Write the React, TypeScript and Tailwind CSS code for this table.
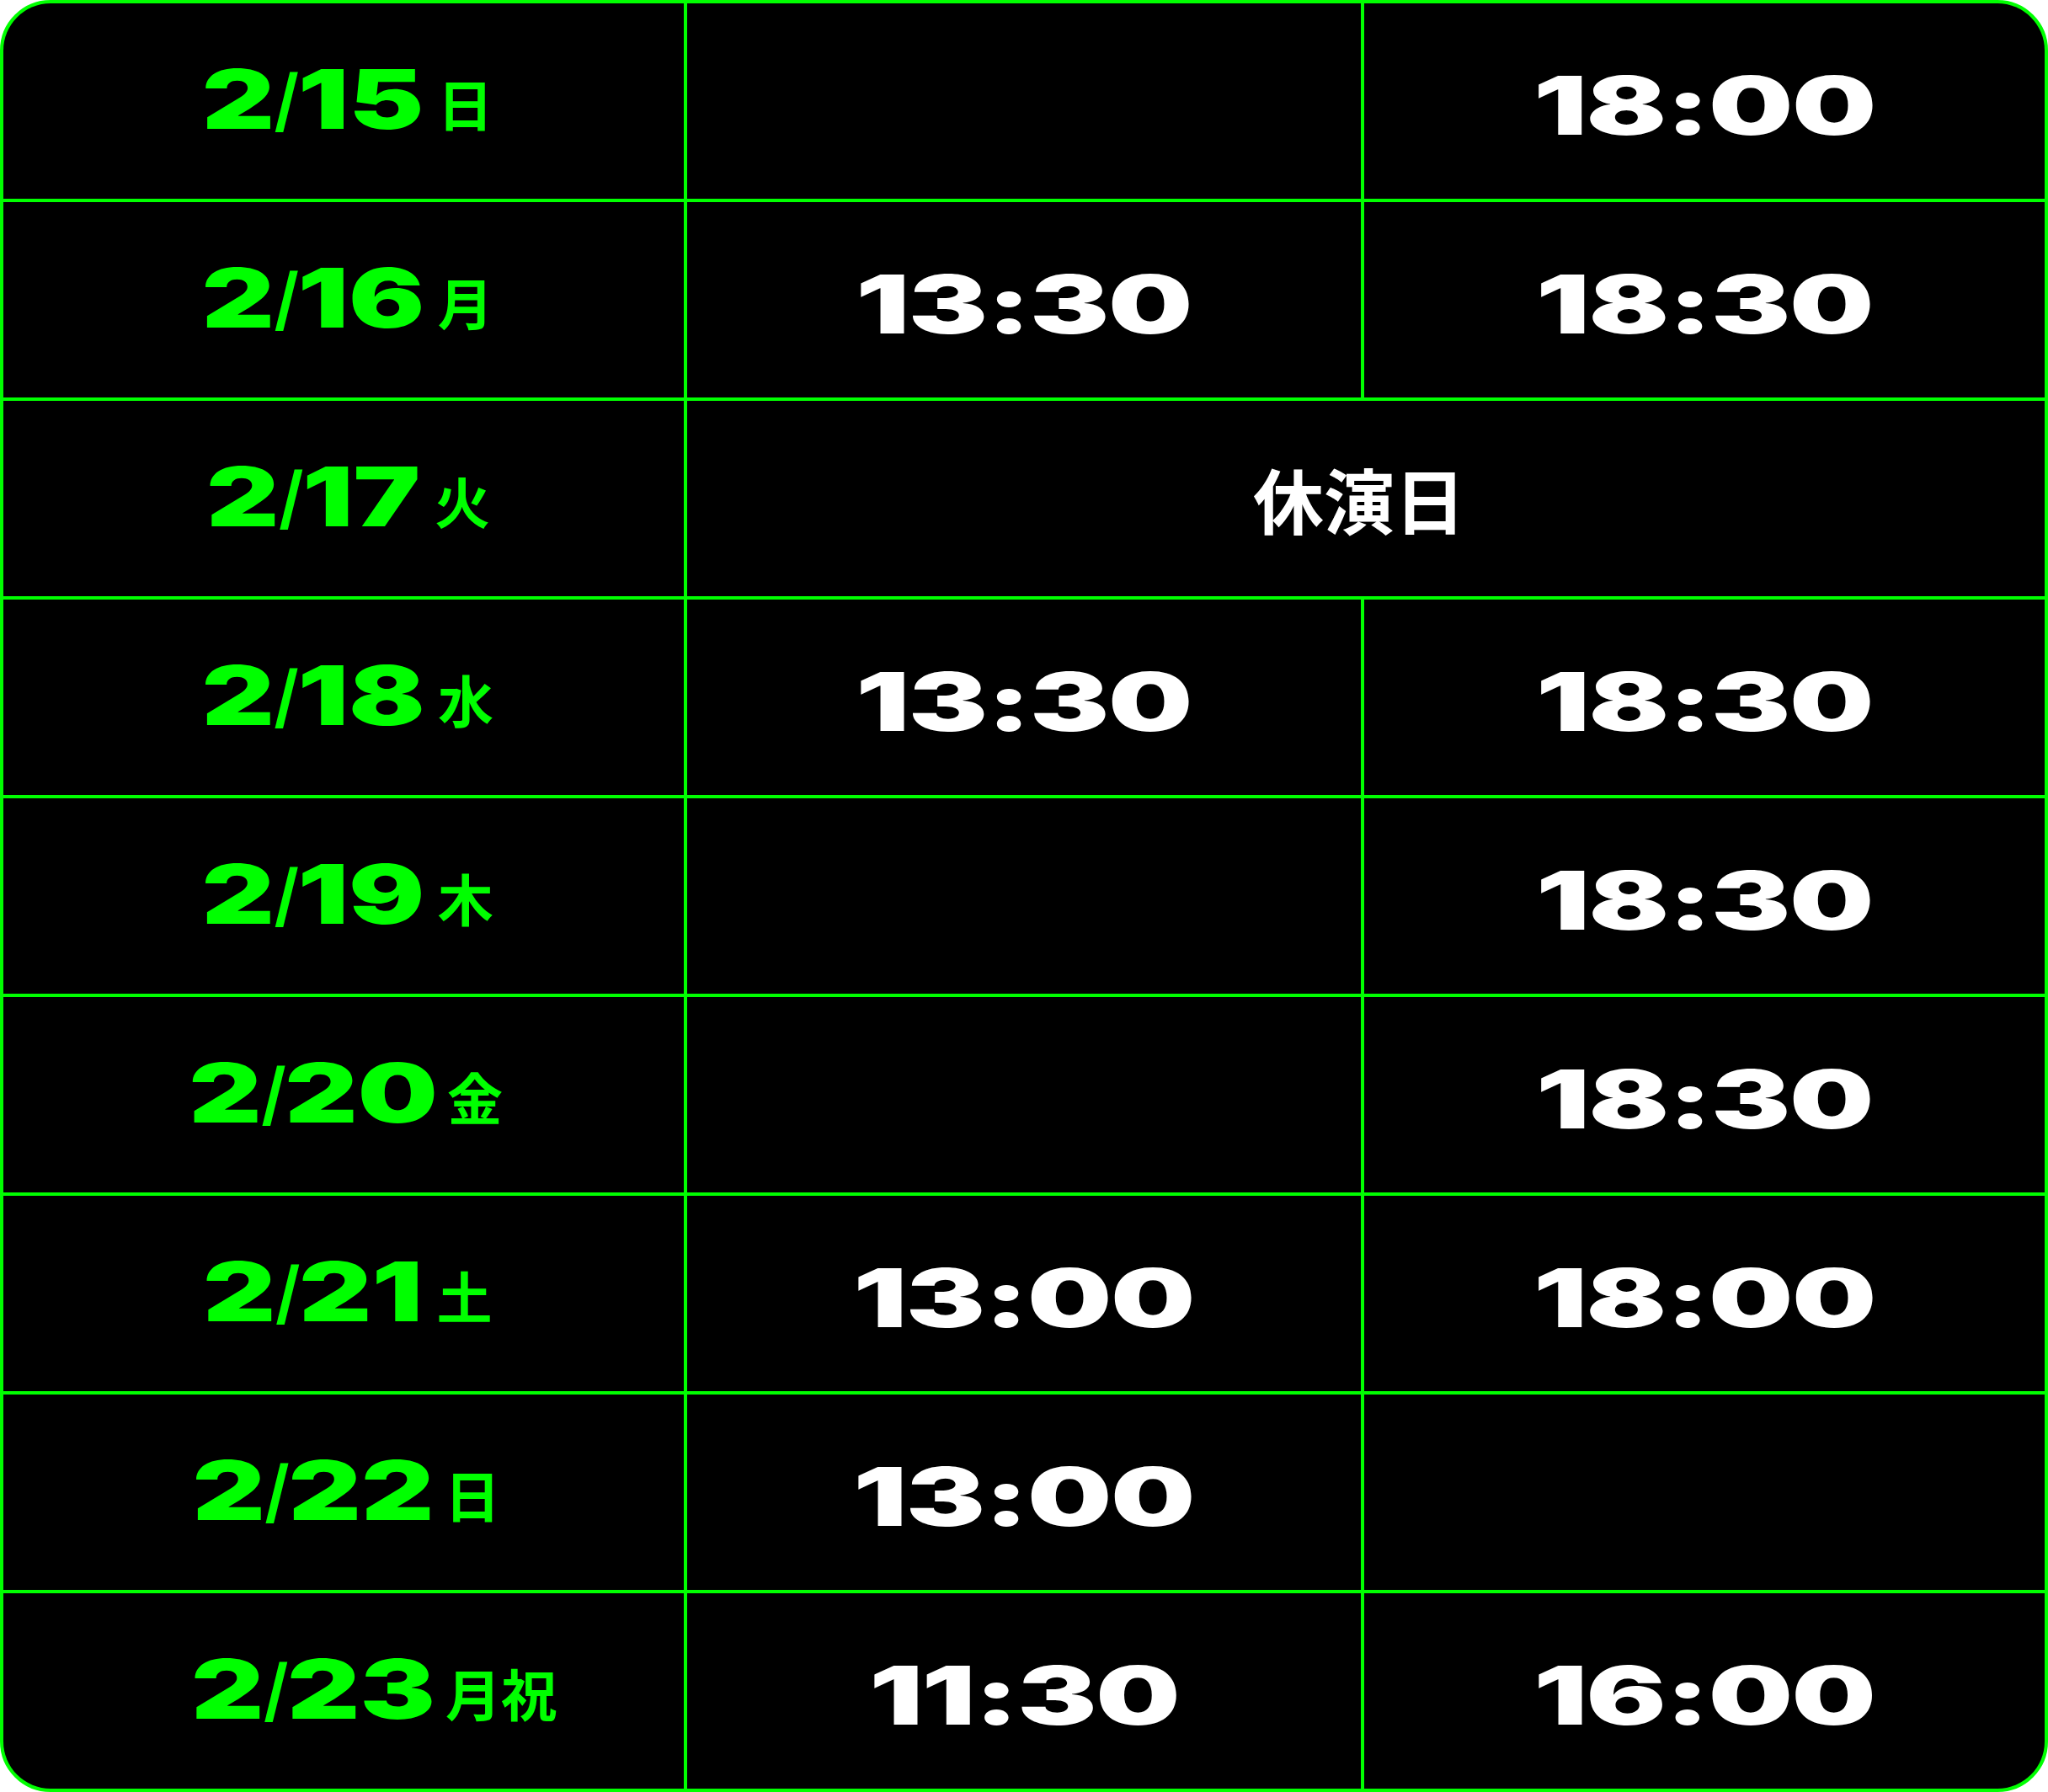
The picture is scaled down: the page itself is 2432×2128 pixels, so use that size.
import React from 'react';

type Row = {
  date: string;
  day: string;
  first?: string;
  second?: string;
  closed?: boolean;
};

const rows: Row[] = [
  { date: '2/15', day: '日', second: '18:00' },
  { date: '2/16', day: '月', first: '13:30', second: '18:30' },
  { date: '2/17', day: '火', closed: true },
  { date: '2/18', day: '水', first: '13:30', second: '18:30' },
  { date: '2/19', day: '木', second: '18:30' },
  { date: '2/20', day: '金', second: '18:30' },
  { date: '2/21', day: '土', first: '13:00', second: '18:00' },
  { date: '2/22', day: '日', first: '13:00' },
  { date: '2/23', day: '月祝', first: '11:30', second: '16:00' },
];

const Time: React.FC<{ value?: string }> = ({ value }) => (
  <div className="flex h-[232px] items-center justify-center bg-black pt-[10px]">
    {value && (
      <span className="inline-block scale-x-[1.47] font-['Inter',sans-serif] text-[96px] font-black leading-none tracking-[-0.01em] text-white">
        {value}
      </span>
    )}
  </div>
);

// number stays centred in the column, the weekday sits right after it
const DateCell: React.FC<{ date: string; day: string }> = ({ date, day }) => {
  const [month, dd] = date.split('/');
  return (
    <div className="flex h-[232px] items-baseline bg-black pr-[72px] pt-[65px] text-[#00ff00]">
      <div className="flex-1" />
      <span className="mx-[0.37em] inline-block scale-x-[1.38] font-['Inter',sans-serif] text-[97px] font-black leading-none">
        {month}
        <span className="mx-[-6px] inline-block -translate-y-[5px] scale-x-[0.66] text-[82px] font-bold">/</span>
        {dd}
      </span>
      <div className="flex flex-1">
        <span className="ml-[16px] inline-block -translate-y-[3px] whitespace-nowrap font-['Noto_Sans_CJK_JP',sans-serif] text-[66px] font-bold leading-none">
          {day}
        </span>
      </div>
    </div>
  );
};

export default function App() {
  return (
    <div className="h-[2128px] w-[2432px] bg-white">
      <div className="grid h-full w-full grid-cols-[808px_800px_808px] gap-[4px] overflow-hidden rounded-[60px] border-4 border-[#00ff00] bg-[#00ff00]">
        {rows.map((r) => (
          <React.Fragment key={r.date}>
            <DateCell date={r.date} day={r.day} />
            {r.closed ? (
              <div className="col-span-2 flex h-[232px] items-center justify-center bg-black pr-[16px]">
                <span className="font-['Noto_Sans_CJK_JP',sans-serif] text-[84px] font-bold leading-none text-white">
                  休演日
                </span>
              </div>
            ) : (
              <>
                <Time value={r.first} />
                <Time value={r.second} />
              </>
            )}
          </React.Fragment>
        ))}
      </div>
    </div>
  );
}
